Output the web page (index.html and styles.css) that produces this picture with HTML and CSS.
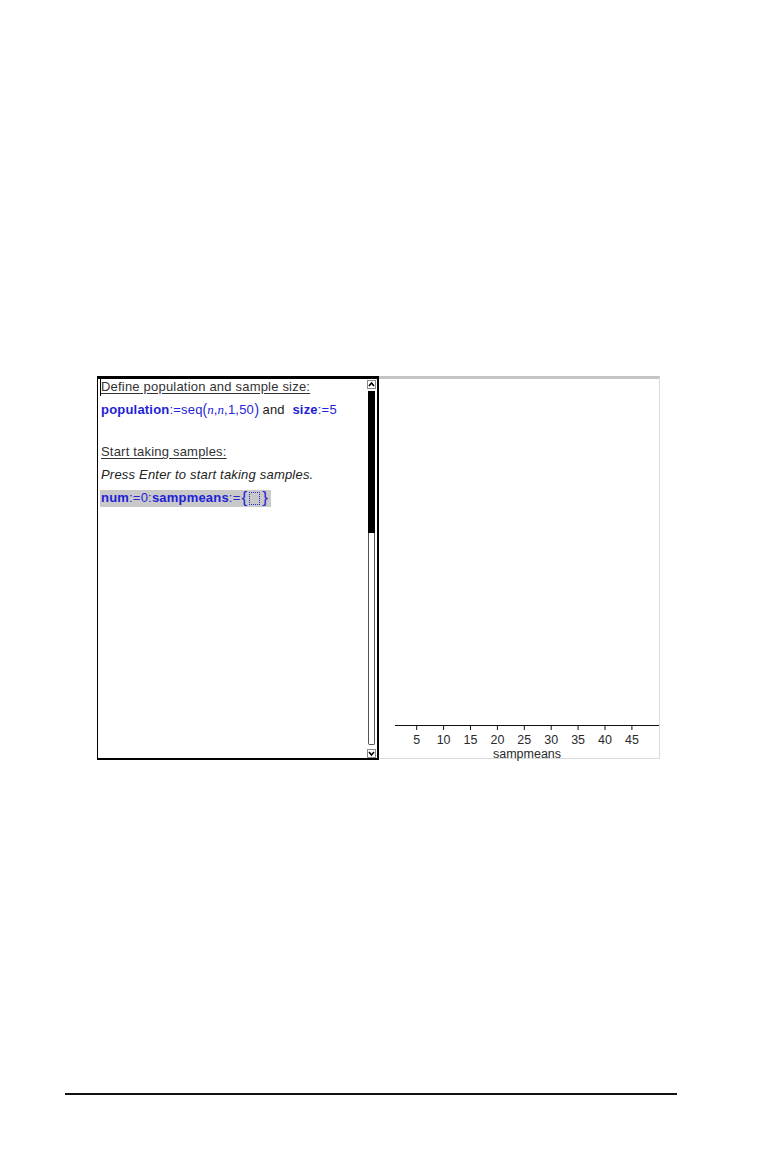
FILE: index.html
```html
<!DOCTYPE html>
<html>
<head>
<meta charset="utf-8">
<link rel="stylesheet" href="styles.css">
</head>
<body>
<div class="page">
  <div class="screen">
    <div class="notes">
      <div class="text">
        <div class="line first"><span class="caret"></span><span class="heading">Define population and sample size:</span></div>
        <div class="line"><span class="kw">population</span><span class="op">:=seq</span><span class="paren">(</span><span class="var">n</span><span class="op">,</span><span class="var">n</span><span class="op">,1,50</span><span class="paren">)</span><span class="plain"> and&nbsp; </span><span class="kw">size</span><span class="op">:=5</span></div>
        <div class="spacer"></div>
        <div class="line"><span class="heading">Start taking samples:</span></div>
        <div class="line"><span class="ital">Press Enter to start taking samples.</span></div>
        <div class="line"><span class="hl"><span class="kw">num</span><span class="op">:=0:</span><span class="kw">sampmeans</span><span class="op">:=</span><span class="brace">{</span><span class="slot"></span><span class="brace">}</span></span></div>
      </div>
      <div class="scrollbar">
        <div class="arrow up">
          <svg width="9" height="9" viewBox="0 0 9 9"><rect x="0.5" y="0.5" width="8" height="8" fill="#fff" stroke="#888"/><path d="M2 6 L4.5 3 L7 6" fill="none" stroke="#000" stroke-width="1.6"/></svg>
        </div>
        <div class="track">
          <div class="thumb"></div>
          <div class="trough"></div>
        </div>
        <div class="arrow down">
          <svg width="9" height="9" viewBox="0 0 9 9"><rect x="0.5" y="0.5" width="8" height="8" fill="#fff" stroke="#888"/><path d="M2 3 L4.5 6 L7 3" fill="none" stroke="#000" stroke-width="1.6"/></svg>
        </div>
      </div>
    </div>
    <div class="plot">
      <svg class="chart" width="280" height="379" viewBox="0 0 280 379">
        <line x1="16" y1="346.5" x2="280" y2="346.5" stroke="#111" stroke-width="1.2"/>
        <g stroke="#111" stroke-width="1">
          <line x1="37.7" y1="346" x2="37.7" y2="351"/>
          <line x1="64.6" y1="346" x2="64.6" y2="351"/>
          <line x1="91.5" y1="346" x2="91.5" y2="351"/>
          <line x1="118.4" y1="346" x2="118.4" y2="351"/>
          <line x1="145.3" y1="346" x2="145.3" y2="351"/>
          <line x1="172.2" y1="346" x2="172.2" y2="351"/>
          <line x1="199.1" y1="346" x2="199.1" y2="351"/>
          <line x1="226" y1="346" x2="226" y2="351"/>
          <line x1="252.9" y1="346" x2="252.9" y2="351"/>
        </g>
        <g class="ticklabel" text-anchor="middle">
          <text x="37.7" y="365">5</text>
          <text x="64.6" y="365">10</text>
          <text x="91.5" y="365">15</text>
          <text x="118.4" y="365">20</text>
          <text x="145.3" y="365">25</text>
          <text x="172.2" y="365">30</text>
          <text x="199.1" y="365">35</text>
          <text x="226" y="365">40</text>
          <text x="252.9" y="365">45</text>
        </g>
        <text class="axislabel" x="148" y="378.5" text-anchor="middle">sampmeans</text>
      </svg>
    </div>
  </div>
  <div class="footer-rule"></div>
</div>
</body>
</html>
```

FILE: styles.css
```css
html, body {
  margin: 0;
  padding: 0;
  background: #fff;
}

.page {
  width: 764px;
  height: 1160px;
  position: relative;
  font-family: "Liberation Sans", Arial, sans-serif;
}

.screen {
  display: flex;
  margin-left: 97px;
  padding-top: 376px;
  width: 564px;
}

.notes {
  width: 279px;
  height: 379px;
  border-top: 3px solid #000;
  border-left: 1px solid #000;
  border-right: 2px solid #000;
  border-bottom: 2px solid #000;
  display: flex;
  background: #fff;
}

.text {
  flex: 1;
  display: flex;
  flex-direction: column;
  gap: 7px;
  padding-left: 3px;
  font-size: 13px;
  letter-spacing: 0.2px;
  color: #1a1a1a;
}

.line {
  height: 16px;
  line-height: 16px;
  white-space: nowrap;
  display: flex;
  align-items: center;
}

.line.first {
  position: relative;
}

.caret {
  position: absolute;
  left: -1px;
  top: 0;
  width: 1px;
  height: 17px;
  background: #000;
}

.spacer {
  height: 12px;
}

.heading {
  text-decoration: underline;
  text-underline-offset: 2px;
  color: #333;
}

.kw {
  font-weight: bold;
  color: #1e1ed8;
}

.op {
  color: #2424d8;
}

.var {
  font-family: "Liberation Serif", "Times New Roman", serif;
  font-style: italic;
  color: #2424d8;
  font-size: 13px;
  letter-spacing: 0;
}

.paren {
  color: #2424d8;
  font-size: 17px;
  line-height: 16px;
  letter-spacing: 0;
  display: inline-block;
  transform: scaleX(0.8);
  margin: 0 -0.5px;
}

.plain {
  color: #1a1a1a;
  white-space: pre;
}

.ital {
  font-style: italic;
  color: #222;
}

.hl {
  display: inline-flex;
  align-items: center;
  background: #c9c9c9;
  height: 17px;
  padding-right: 2px;
  margin-left: -1px;
  padding-left: 1px;
}

.brace {
  color: #2424d8;
  font-size: 17px;
  line-height: 16px;
  margin: 0 1px;
}

.slot {
  display: inline-block;
  width: 9px;
  height: 11px;
  border: 1px dotted #2424d8;
  margin: 0 1px;
}

.scrollbar {
  width: 10px;
  display: flex;
  flex-direction: column;
  align-items: flex-start;
}

.arrow {
  height: 10px;
  display: flex;
  align-items: center;
}

.arrow svg {
  display: block;
}

.track {
  flex: 1;
  display: flex;
  flex-direction: column;
  padding: 2px 0 3px 1px;
}

.thumb {
  width: 7px;
  height: 142px;
  background: #000;
}

.trough {
  flex: 1;
  width: 5px;
  border: 1px solid #555;
  border-top: none;
  border-radius: 0 0 2px 2px;
  background: #fff;
}

.plot {
  width: 280px;
  height: 379px;
  border-top: 3px solid #c4c4c4;
  border-right: 1px solid #dcdcdc;
  border-bottom: 1px solid #dcdcdc;
  background: #fff;
}

.chart {
  display: block;
  overflow: visible;
}

.ticklabel text {
  font-family: "Liberation Sans", Arial, sans-serif;
  font-size: 12.5px;
  fill: #2a2a2a;
}

.axislabel {
  font-family: "Liberation Sans", Arial, sans-serif;
  font-size: 12.5px;
  fill: #2a2a2a;
}

.footer-rule {
  position: absolute;
  left: 65px;
  top: 1093px;
  width: 612px;
  height: 2px;
  background: #111;
}
```
